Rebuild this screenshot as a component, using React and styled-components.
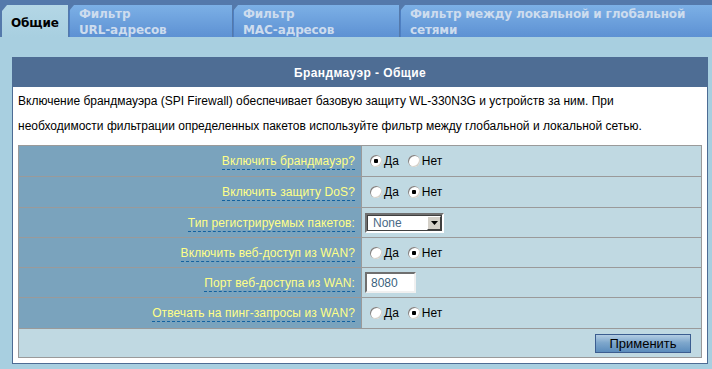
import styled, { createGlobalStyle } from "styled-components"

const GlobalStyle = createGlobalStyle`
    html, body {
        margin: 0;
        padding: 0;
        background: #a8cfe0;
    }
    body {
        font-family: "Liberation Sans", Arial, sans-serif;
        font-size: 12px;
    }
`

const tabs = [
    { id: 'general', lines: ['Общие'], width: 66, active: true },
    { id: 'url', lines: ['Фильтр', 'URL-адресов'], width: 163 },
    { id: 'mac', lines: ['Фильтр', 'MAC-адресов'], width: 166 },
    { id: 'lanwan', lines: ['Фильтр между локальной и глобальной', 'сетями'], width: 312 },
]

const rows = [
    { label: 'Включить брандмауэр?', type: 'radio', name: 'fw', value: 'yes', height: 30 },
    { label: 'Включить защиту DoS?', type: 'radio', name: 'dos', value: 'no', height: 30 },
    { label: 'Тип регистрируемых пакетов:', type: 'select', height: 29 },
    { label: 'Включить веб-доступ из WAN?', type: 'radio', name: 'web', value: 'no', height: 29 },
    { label: 'Порт веб-доступа из WAN:', type: 'input', height: 29 },
    { label: 'Отвечать на пинг-запросы из WAN?', type: 'radio', name: 'ping', value: 'no', height: 30 },
]

const RadioPair = ({ name, value }) => (
    <RadioGroup>
        <RadioLabel>
            <Radio type="radio" name={name} defaultChecked={value === 'yes'} />Да
        </RadioLabel>
        <RadioLabel>
            <Radio type="radio" name={name} defaultChecked={value === 'no'} />Нет
        </RadioLabel>
    </RadioGroup>
)

const FakeSelect = () => (
    <SelectWrapper>
        <Select defaultValue="none">
            <option value="none">None</option>
            <option value="drop">Dropped</option>
            <option value="accept">Accepted</option>
            <option value="both">Both</option>
        </Select>
        <SelectArrow>
            <svg width="7" height="4" viewBox="0 0 7 4"><path d="M0 0h7L3.5 4z" fill="#000" /></svg>
        </SelectArrow>
    </SelectWrapper>
)

const renderField = (row) => {
    if (row.type === 'radio') return <RadioPair name={row.name} value={row.value} />
    if (row.type === 'select') return <FakeSelect />
    return <TextInput defaultValue="8080" />
}

export default function App() {
    return (
        <Page>
            <GlobalStyle />
            <TabBar>
                {tabs.map(tab => (
                    <Tab key={tab.id} $active={tab.active} $width={tab.width}>
                        {tab.lines.map(line => <span key={line}>{line}</span>)}
                    </Tab>
                ))}
            </TabBar>

            <Panel>
                <PanelHeader>Брандмауэр - Общие</PanelHeader>
                <PanelBody>
                    <Description>
                        Включение брандмауэра (SPI Firewall) обеспечивает базовую защиту WL-330N3G и устройств за ним. При
                        необходимости фильтрации определенных пакетов используйте фильтр между глобальной и локальной сетью.
                    </Description>

                    <SettingsTable>
                        <tbody>
                            {rows.map(row => (
                                <tr key={row.label}>
                                    <LabelCell $height={row.height}><HintLabel>{row.label}</HintLabel></LabelCell>
                                    <ValueCell>{renderField(row)}</ValueCell>
                                </tr>
                            ))}
                            <tr>
                                <ActionCell colSpan={2}>
                                    <ApplyButton type="button">Применить</ApplyButton>
                                </ActionCell>
                            </tr>
                        </tbody>
                    </SettingsTable>
                </PanelBody>
            </Panel>
        </Page>
    )
}

const Page = styled.div`
    width: 712px;
    height: 369px;
    overflow: hidden;
    background: #a8cfe0;
`

const TabBar = styled.div`
    display: flex;
    align-items: flex-end;
    gap: 1px;
    height: 37px;
    padding-left: 2px;
    background: #5479ab;
    box-sizing: border-box;
`

const Tab = styled.div`
    flex: none;
    width: ${({ $width }) => $width}px;
    height: 32px;
    box-sizing: border-box;
    display: flex;
    flex-direction: column;
    justify-content: ${({ $active }) => $active ? 'center' : 'flex-start'};
    padding: ${({ $active }) => $active ? '4px 0 0 9px' : '1px 0 0 9px'};
    font-family: "DejaVu Sans", Verdana, sans-serif;
    font-weight: bold;
    font-size: 12px;
    letter-spacing: -0.15px;
    line-height: 16px;
    white-space: nowrap;
    overflow: hidden;
    clip-path: polygon(0 6px, 5px 0, 100% 0, 100% 100%, 0 100%);
    color: ${({ $active }) => $active ? '#000' : '#cddcee'};
    background: ${({ $active }) => $active
        ? 'linear-gradient(#b4d7e6, #a8cfe0)'
        : 'linear-gradient(#7cb0e6, #5d91d3)'};
    border-left: ${({ $active }) => $active ? 'none' : '1px solid #4e7fc2'};
`

const Panel = styled.div`
    margin: 20px 4px 0 12px;
    border: 1px solid #4d6c94;
    background: #fff;
`

const PanelHeader = styled.div`
    height: 29px;
    background: #4e6d94;
    color: #fff;
    font-weight: bold;
    font-size: 12px;
    letter-spacing: 0.4px;
    display: flex;
    align-items: center;
    justify-content: center;
`

const PanelBody = styled.div`
    padding: 2px 5px 5px;
`

const Description = styled.p`
    margin: 0 0 6px;
    font-size: 12px;
    line-height: 25px;
    color: #000;
`

const SettingsTable = styled.table`
    width: 100%;
    border-collapse: collapse;
    border: 1px solid #9a9a9a;
`

const LabelCell = styled.td`
    width: 336px;
    height: ${({ $height }) => $height}px;
    padding: 0 6px 0 0;
    text-align: right;
    vertical-align: middle;
    background: #7aa3bd;
    border: 1px solid #9a9a9a;
`

const HintLabel = styled.span`
    color: #ffff88;
    font-size: 12px;
    letter-spacing: 0.1px;
    padding-bottom: 1px;
    border-bottom: 1px dashed #1262a0;
`

const ValueCell = styled.td`
    padding: 0 0 0 3px;
    vertical-align: middle;
    background: #c0d9e2;
    border: 1px solid #9a9a9a;
`

const ActionCell = styled.td`
    height: 28px;
    padding: 0 10px 0 0;
    text-align: right;
    vertical-align: middle;
    background: #c0d9e2;
    border: 1px solid #9a9a9a;
`

const RadioGroup = styled.div`
    display: flex;
    align-items: center;
    gap: 9px;
    padding-left: 5px;
`

const RadioLabel = styled.label`
    display: flex;
    align-items: center;
    gap: 2px;
    font-size: 12px;
    color: #000;
`

const Radio = styled.input`
    appearance: none;
    margin: 0;
    width: 12px;
    height: 12px;
    border-radius: 50%;
    background: #fff;
    box-shadow: inset 1px 1px 0 #808080, inset -1px -1px 0 #d4d0c8;

    &:checked {
        background: radial-gradient(circle, #000 0 2px, #fff 2.5px);
    }
`

const SelectWrapper = styled.div`
    position: relative;
    width: 79px;
    height: 20px;
`

const Select = styled.select`
    appearance: none;
    width: 100%;
    height: 100%;
    margin: 0;
    padding: 0 0 0 6px;
    box-sizing: border-box;
    border: 2px solid;
    border-color: #6f6f6f #fff #fff #6f6f6f;
    outline: 1px solid #404040;
    outline-offset: -3px;
    background: #fff;
    color: #4a6a86;
    font-family: "Liberation Sans", Arial, sans-serif;
    font-size: 12px;
`

const SelectArrow = styled.span`
    position: absolute;
    top: 3px;
    right: 3px;
    width: 14px;
    height: 14px;
    box-sizing: border-box;
    display: flex;
    align-items: center;
    justify-content: center;
    background: #d4d0c8;
    border: 1px solid;
    border-color: #fff #404040 #404040 #fff;
    pointer-events: none;
`

const TextInput = styled.input`
    width: 51px;
    height: 21px;
    margin: 0;
    padding: 0 0 0 4px;
    box-sizing: border-box;
    border: 2px solid;
    border-color: #6f6f6f #f0f0f0 #f0f0f0 #6f6f6f;
    background: #fff;
    color: #3a5f7c;
    font-family: "Liberation Sans", Arial, sans-serif;
    font-size: 12px;
`

const ApplyButton = styled.button`
    width: 96px;
    height: 19px;
    padding: 0;
    border: 1px solid #3b5d90;
    background: linear-gradient(#b3cde3 0%, #7ea7cc 45%, #5b8cbc 100%);
    color: #000;
    font-family: "Liberation Sans", Arial, sans-serif;
    font-size: 13px;
    line-height: 17px;
    cursor: pointer;
`
